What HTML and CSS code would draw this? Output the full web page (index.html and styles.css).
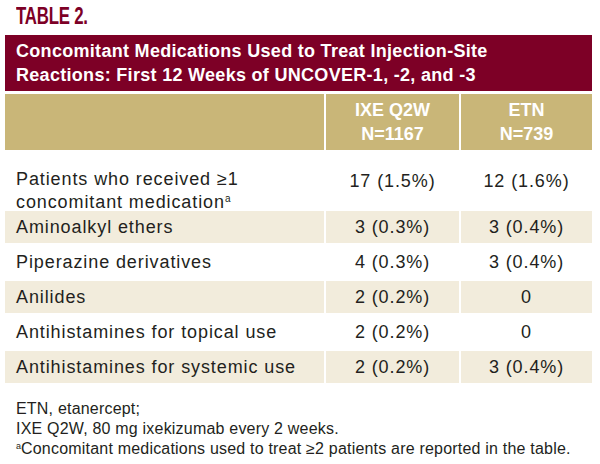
FILE: index.html
```html
<!DOCTYPE html>
<html lang="en">
<head>
<meta charset="utf-8">
<title>Table 2</title>
<link rel="stylesheet" href="styles.css">
</head>
<body>
<div class="page">
  <div class="table-label"><span class="label-text">TABLE 2.</span></div>
  <div class="grid">
    <div class="caption">Concomitant Medications Used to Treat Injection-Site<br>Reactions: First 12 Weeks of UNCOVER-1, -2, and -3</div>
    <div class="head"></div>
    <div class="head center">IXE Q2W<br>N=1167</div>
    <div class="head center">ETN<br>N=739</div>

    <div class="cell label first">Patients who received ≥1<br>concomitant medication<sup>a</sup></div>
    <div class="cell val first">17 (1.5%)</div>
    <div class="cell val first">12 (1.6%)</div>

    <div class="cell label shade">Aminoalkyl ethers</div>
    <div class="cell val shade">3 (0.3%)</div>
    <div class="cell val shade">3 (0.4%)</div>

    <div class="cell label">Piperazine derivatives</div>
    <div class="cell val">4 (0.3%)</div>
    <div class="cell val">3 (0.4%)</div>

    <div class="cell label shade">Anilides</div>
    <div class="cell val shade">2 (0.2%)</div>
    <div class="cell val shade">0</div>

    <div class="cell label">Antihistamines for topical use</div>
    <div class="cell val">2 (0.2%)</div>
    <div class="cell val">0</div>

    <div class="cell label shade">Antihistamines for systemic use</div>
    <div class="cell val shade">2 (0.2%)</div>
    <div class="cell val shade">3 (0.4%)</div>
  </div>
  <div class="notes">
    <p>ETN, etanercept;</p>
    <p>IXE Q2W, 80 mg ixekizumab every 2 weeks.</p>
    <p><sup>a</sup>Concomitant medications used to treat ≥2 patients are reported in the table.</p>
  </div>
</div>
</body>
</html>
```
FILE: styles.css
```css
html, body {
  margin: 0;
  padding: 0;
  background: #ffffff;
}

.page {
  width: 600px;
  height: 464px;
  padding: 3px 0 0 5px;
  box-sizing: border-box;
  font-family: "Liberation Sans", Arial, sans-serif;
  color: #231f20;
}

.table-label {
  font-weight: bold;
  font-size: 24px;
  line-height: 26px;
  color: #7d0026;
  padding-left: 11px;
  height: 32px;
}

.label-text {
  display: inline-block;
  transform: scaleX(0.7);
  transform-origin: left center;
  letter-spacing: -0.3px;
}

.grid {
  display: grid;
  grid-template-columns: 319px 133px 131px;
  column-gap: 2px;
  row-gap: 3px;
  width: 587px;
}

.caption {
  grid-column: 1 / 4;
  background: #7d0026;
  color: #ffffff;
  font-weight: bold;
  font-size: 18px;
  line-height: 24px;
  height: 56px;
  box-sizing: border-box;
  padding: 4px 11px;
  letter-spacing: 0.3px;
}

.head {
  background: #c9b678;
  color: #ffffff;
  font-weight: bold;
  font-size: 18px;
  line-height: 24px;
  height: 56px;
  box-sizing: border-box;
  padding: 4px 0;
}

.center {
  text-align: center;
}

.cell {
  font-size: 18px;
  line-height: 22px;
  height: 32px;
  box-sizing: border-box;
  display: flex;
  align-items: center;
  letter-spacing: 0.9px;
}

.cell.first {
  height: 55px;
}

.label {
  padding-left: 11px;
}

.label.first {
  display: block;
  padding-top: 15px;
  line-height: 23px;
}

.val {
  justify-content: center;
}

.shade {
  background: #f2ecdc;
}

sup {
  font-size: 10px;
  line-height: 0;
  vertical-align: 6px;
  letter-spacing: 0;
}

.notes {
  padding: 16px 0 0 11px;
  font-size: 16px;
  line-height: 20px;
  letter-spacing: 0.2px;
}

.notes p {
  margin: 0;
}

.notes sup {
  font-size: 9px;
  vertical-align: 5px;
}
```
